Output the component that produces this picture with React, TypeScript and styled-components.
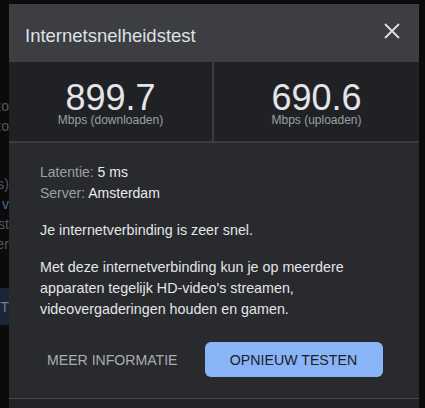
import React from "react";
import styled, { createGlobalStyle } from "styled-components";

const Global = createGlobalStyle`
  html, body { margin: 0; padding: 0; background: #0b0b0c; }
  body { font-family: "Liberation Sans", Arial, sans-serif; }
  * { box-sizing: border-box; }
`;

const Screen = styled.div`
  position: relative;
  width: 425px;
  height: 408px;
  overflow: hidden;
  background: #0b0b0c;
`;

/* page content behind the modal, only a sliver shows on the left */
const BehindPage = styled.div`
  width: 9px;
  height: 100%;
  overflow: hidden;
  display: flex;
  flex-direction: column;
  padding-top: 96px;
  font-size: 14px;
  color: #55585c;
`;

const BehindGroup = styled.div<{ $gap: number }>`
  margin-top: ${(p) => p.$gap}px;
  display: flex;
  flex-direction: column;
`;

const BehindLine = styled.div<{ $link?: boolean }>`
  height: 20px;
  line-height: 20px;
  display: flex;
  justify-content: flex-end;
  white-space: nowrap;
  color: ${(p) => (p.$link ? "#4a6a98" : "#55585c")};
`;

const BehindButton = styled.div`
  margin-top: 34px;
  height: 37px;
  display: flex;
  align-items: center;
  justify-content: flex-end;
  background: #1c2635;
  color: #6e7f99;
  white-space: nowrap;
`;

const Dialog = styled.div`
  position: absolute;
  top: 4px;
  left: 9px;
  width: 410px;
  bottom: 0;
  display: flex;
  flex-direction: column;
  background: #292a2d;
  color: #e8eaed;
`;

const Header = styled.div`
  display: flex;
  justify-content: space-between;
  align-items: flex-start;
  height: 58px;
  padding: 20px 15px 0 16px;
  background: #3c3e42;
`;

const Title = styled.h1`
  margin: 0;
  font-size: 18.5px;
  line-height: 24px;
  font-weight: 400;
  color: #dfe1e5;
`;

const CloseButton = styled.button`
  margin-top: -5px;
  width: 24px;
  height: 24px;
  padding: 0;
  border: none;
  background: transparent;
  color: #dadce0;
  display: flex;
  align-items: center;
  justify-content: center;
  cursor: pointer;
`;

const Stats = styled.div`
  display: grid;
  grid-template-columns: 1fr 1fr;
  background: #202124;
  border-bottom: 2px solid #3a3c3f;
`;

const StatCell = styled.div<{ $divider?: boolean }>`
  display: flex;
  flex-direction: column;
  align-items: center;
  padding: 19px 0 15px;
  border-right: ${(p) => (p.$divider ? "2px solid #3a3c3f" : "none")};
`;

const StatValue = styled.div`
  font-size: 36px;
  line-height: 33px;
  color: #e3e5e8;
`;

const StatLabel = styled.div`
  font-size: 12px;
  line-height: 12px;
  color: #9aa0a6;
`;

const Body = styled.div`
  padding: 19px 31px 0;
  font-size: 14px;
  line-height: 21px;
`;

const InfoList = styled.div`
  display: flex;
  flex-direction: column;
`;

const InfoKey = styled.span`
  color: #9aa0a6;
`;

const InfoValue = styled.span`
  color: #e8eaed;
`;

const Paragraph = styled.p`
  margin: 16px 0 0;
  font-size: 14.3px;
  color: #e3e5e8;
`;

const Actions = styled.div`
  display: flex;
  align-items: center;
  gap: 20px;
  padding: 22px 31px 21px;
`;

const TextButton = styled.button`
  height: 35px;
  padding: 0 7px;
  border: none;
  background: transparent;
  font-family: inherit;
  font-size: 14.1px;
  color: #a9adb1;
  cursor: pointer;
`;

const PrimaryButton = styled.button`
  width: 178px;
  height: 35px;
  border: none;
  border-radius: 6px;
  background: #8ab4f8;
  font-family: inherit;
  font-size: 14.2px;
  color: #202124;
  cursor: pointer;
`;

const FooterStrip = styled.div`
  flex: 1;
  border-top: 1px solid #46484b;
  background: #232427;
`;

const CloseIcon = () => (
  <svg width="24" height="24" viewBox="0 0 24 24" fill="none">
    <path d="M5 5L19 19M19 5L5 19" stroke="currentColor" strokeWidth="2" strokeLinecap="butt" />
  </svg>
);

export default function App() {
  return (
    <>
      <Global />
      <Screen>
        <BehindPage>
          <BehindGroup $gap={0}>
            <BehindLine>Snelheid zo</BehindLine>
            <BehindLine>test zo</BehindLine>
          </BehindGroup>
          <BehindGroup $gap={38}>
            <BehindLine>(Mbps)</BehindLine>
            <BehindLine $link>Meer v</BehindLine>
            <BehindLine>test</BehindLine>
            <BehindLine>meer</BehindLine>
          </BehindGroup>
          <BehindButton>TEST</BehindButton>
        </BehindPage>

        <Dialog>
          <Header>
            <Title>Internetsnelheidstest</Title>
            <CloseButton aria-label="Sluiten">
              <CloseIcon />
            </CloseButton>
          </Header>

          <Stats>
            <StatCell $divider>
              <StatValue>899.7</StatValue>
              <StatLabel>Mbps (downloaden)</StatLabel>
            </StatCell>
            <StatCell>
              <StatValue>690.6</StatValue>
              <StatLabel>Mbps (uploaden)</StatLabel>
            </StatCell>
          </Stats>

          <Body>
            <InfoList>
              <div>
                <InfoKey>Latentie: </InfoKey>
                <InfoValue>5 ms</InfoValue>
              </div>
              <div>
                <InfoKey>Server: </InfoKey>
                <InfoValue>Amsterdam</InfoValue>
              </div>
            </InfoList>
            <Paragraph>Je internetverbinding is zeer snel.</Paragraph>
            <Paragraph>
              Met deze internetverbinding kun je op meerdere apparaten tegelijk HD-video's
              streamen, videovergaderingen houden en gamen.
            </Paragraph>
          </Body>

          <Actions>
            <TextButton>MEER INFORMATIE</TextButton>
            <PrimaryButton>OPNIEUW TESTEN</PrimaryButton>
          </Actions>

          <FooterStrip />
        </Dialog>
      </Screen>
    </>
  );
}
